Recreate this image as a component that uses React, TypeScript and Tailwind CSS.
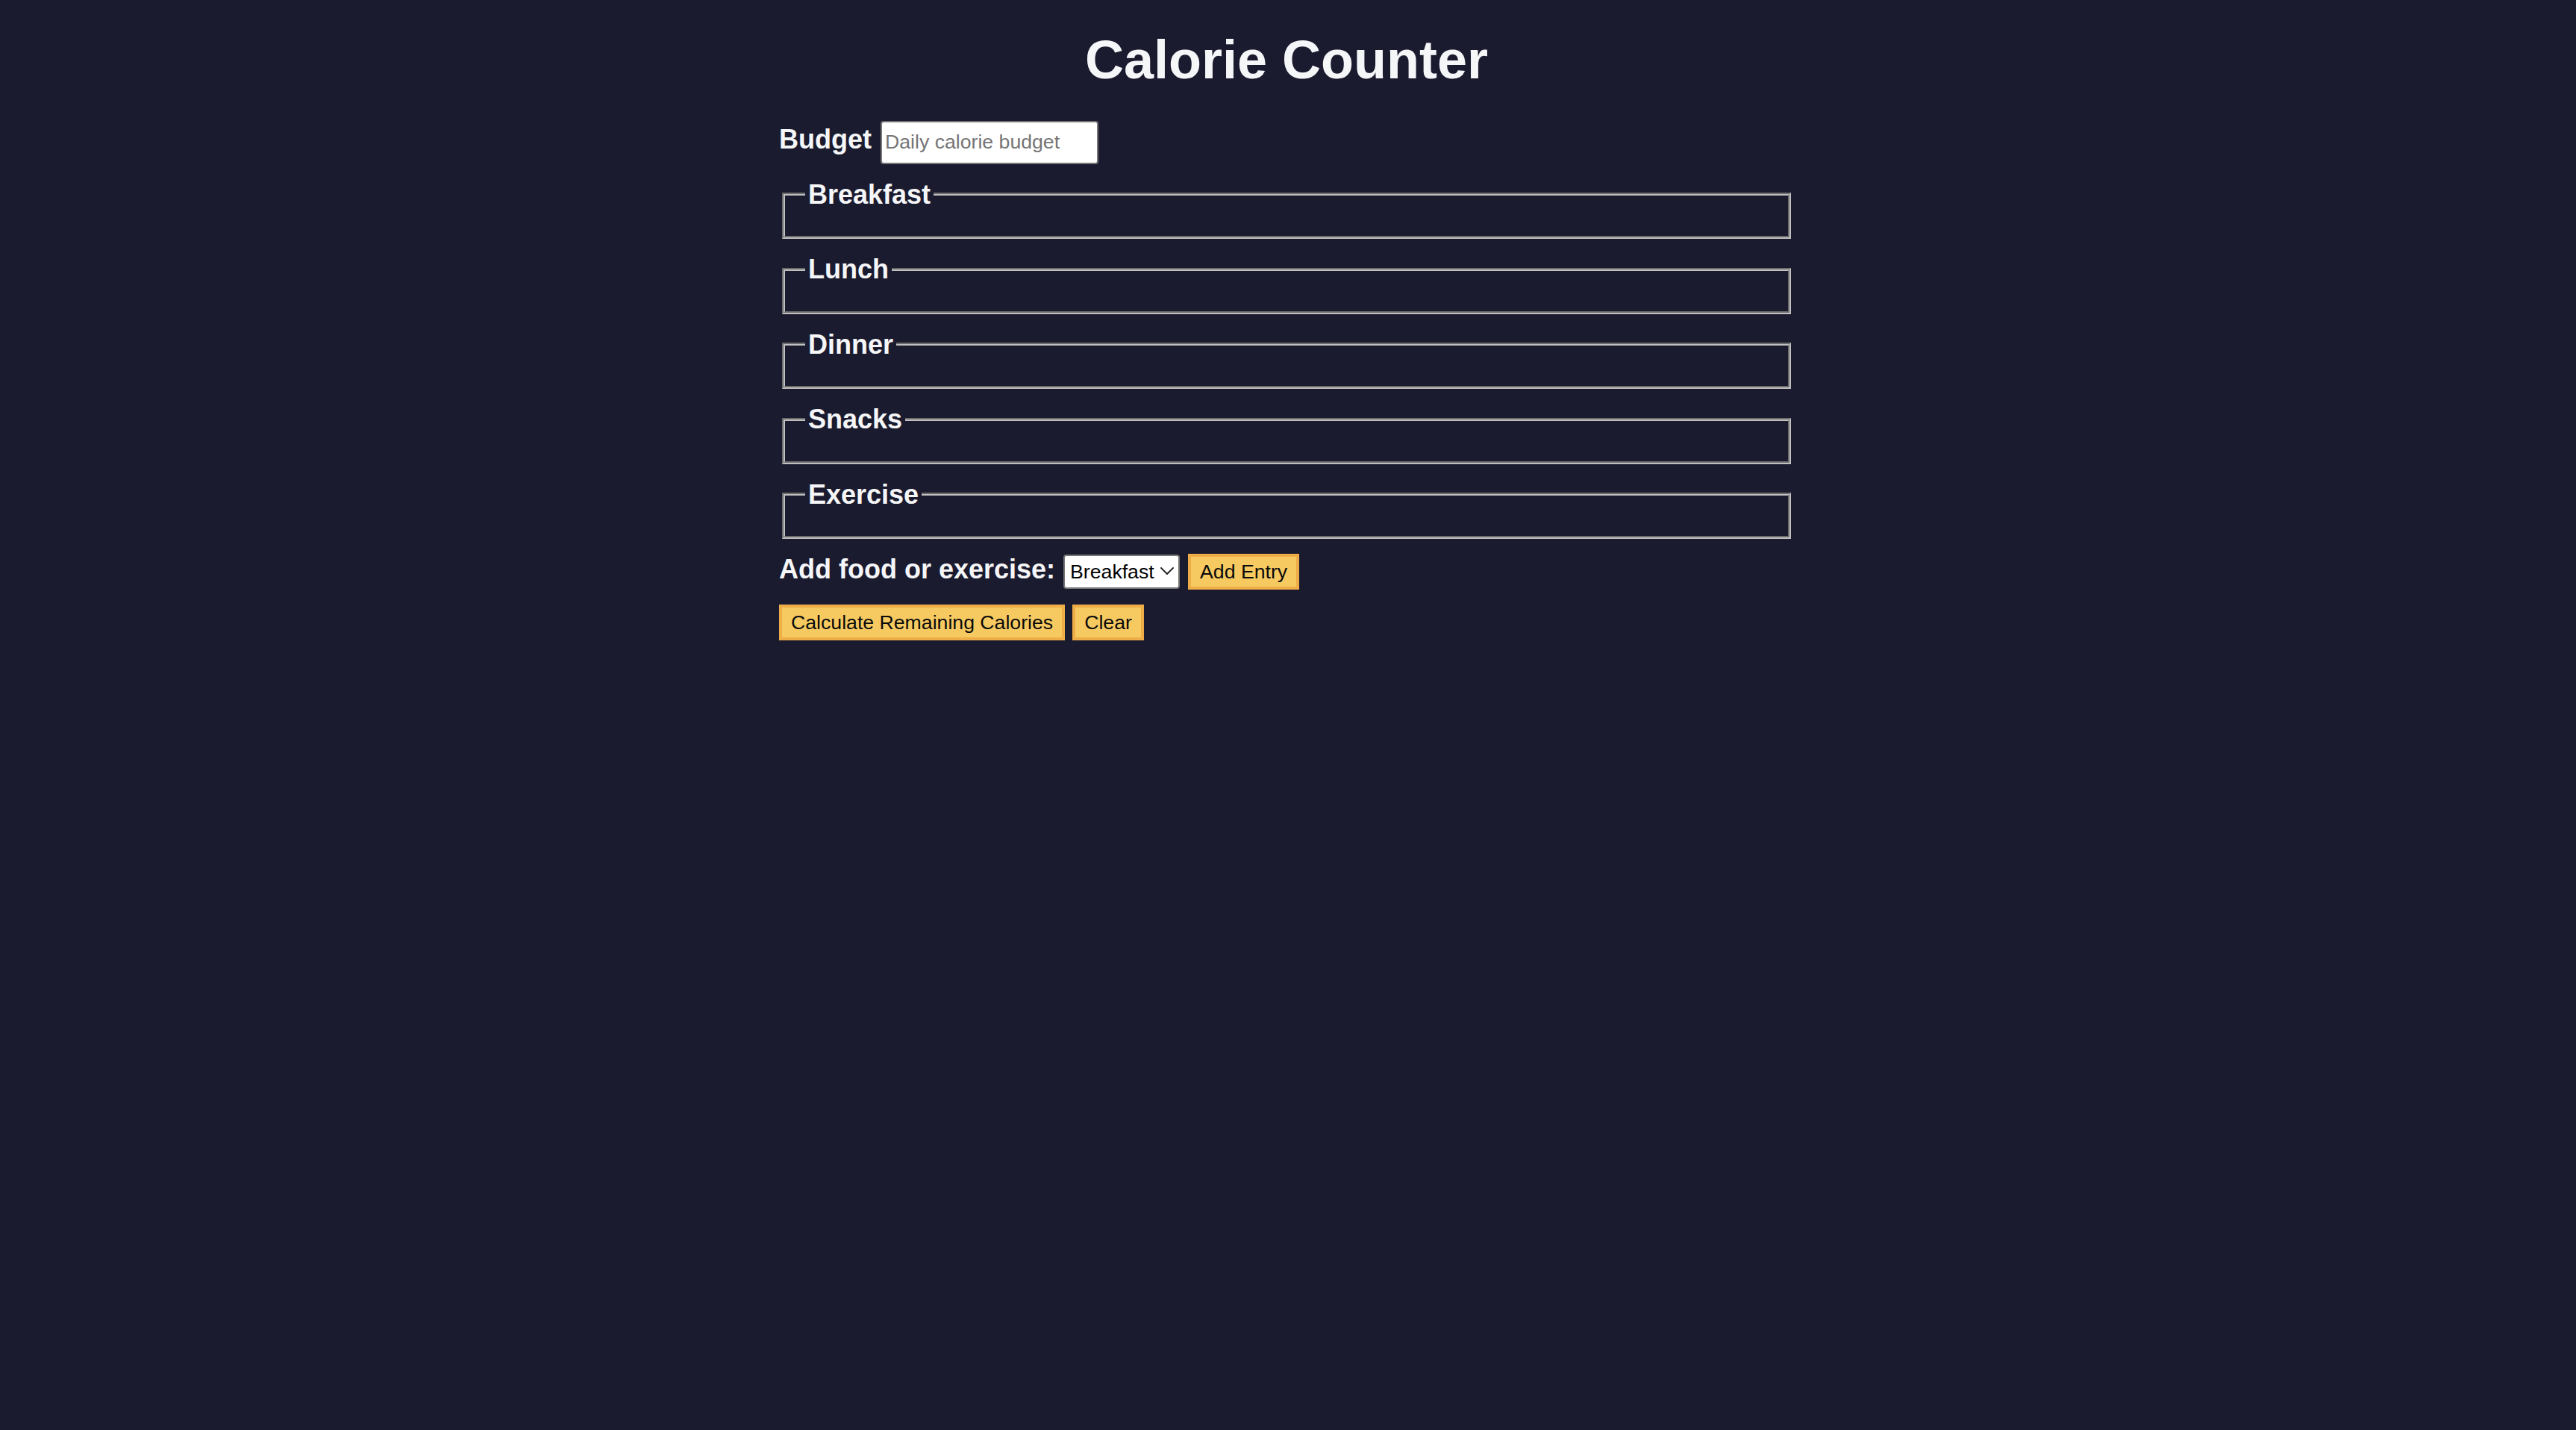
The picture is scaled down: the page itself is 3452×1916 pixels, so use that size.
import { ChangeEvent, FormEvent, useState } from "react";

const meals = ["Breakfast", "Lunch", "Dinner", "Snacks", "Exercise"];

function Chevron() {
  return (
    <svg
      width="18"
      height="10"
      viewBox="0 0 18 10"
      fill="none"
      stroke="#1b1b1b"
      strokeWidth="1.8"
      strokeLinecap="round"
      strokeLinejoin="round"
    >
      <polyline points="1,1 9,9 17,1" />
    </svg>
  );
}

export default function App() {
  const [budget, setBudget] = useState("");
  const [entry, setEntry] = useState("breakfast");

  function handleSubmit(e: FormEvent) {
    e.preventDefault();
  }

  return (
    <div className="min-h-screen bg-[#1b1b30] pt-[39px] pr-[10px] pl-[6px] font-['Liberation_Sans',Arial,sans-serif] text-[36px] leading-[1.149] text-[#f5f6f7]">
      <h1 className="mb-[40px] text-center text-[72px] font-bold leading-[1.149]">
        Calorie Counter
      </h1>
      <div className="mx-auto w-[90%] max-w-[1360px]">
        <form onSubmit={handleSubmit}>
          <div className="flex items-baseline gap-[12px]">
            <label htmlFor="budget" className="font-bold">
              Budget
            </label>
            <input
              id="budget"
              type="number"
              min="0"
              value={budget}
              onChange={(e: ChangeEvent<HTMLInputElement>) => setBudget(e.target.value)}
              placeholder="Daily calorie budget"
              className="h-[58px] w-[292px] rounded-[4px] border-2 border-[#767676] bg-white px-[4px] text-[26.67px] text-black placeholder:text-[#757575] [appearance:textfield]"
            />
          </div>

          {meals.map((meal) => (
            <fieldset
              key={meal}
              className="mx-[4px] mt-[20px] border-[4px] border-[#c0c0c0] px-[27px] pt-[12.6px] pb-[22.5px] [border-style:groove]"
            >
              <legend className="px-[4px] font-bold">{meal}</legend>
              <div className="flex flex-col"></div>
            </fieldset>
          ))}

          <div className="mt-[20px] flex items-baseline">
            <label htmlFor="entry-dropdown" className="font-bold">
              Add food or exercise:
            </label>
            <div className="relative ml-[11px] flex">
              <select
                id="entry-dropdown"
                value={entry}
                onChange={(e: ChangeEvent<HTMLSelectElement>) => setEntry(e.target.value)}
                className="h-[46px] w-[156px] appearance-none rounded-[4px] border-2 border-[#767676] bg-white pr-[30px] pl-[7px] text-[26.67px] text-black"
              >
                {meals.map((m) => (
                  <option key={m} value={m.toLowerCase()}>
                    {m}
                  </option>
                ))}
              </select>
              <span className="pointer-events-none absolute top-[17px] right-[8px] flex">
                <Chevron />
              </span>
            </div>
            <button
              type="button"
              className="ml-[11px] h-[48px] border-4 border-[#efad48] bg-[#f6ca61] px-[12px] text-[26.67px] text-[#0a0a0a]"
            >
              Add Entry
            </button>
          </div>

          <div className="mt-[20px] flex gap-[10px]">
            <button
              type="submit"
              className="h-[48px] border-4 border-[#efad48] bg-[#f6ca61] px-[12px] text-[26.67px] text-[#0a0a0a]"
            >
              Calculate Remaining Calories
            </button>
            <button
              type="button"
              onClick={() => setBudget("")}
              className="h-[48px] border-4 border-[#efad48] bg-[#f6ca61] px-[12px] text-[26.67px] text-[#0a0a0a]"
            >
              Clear
            </button>
          </div>
        </form>
      </div>
    </div>
  );
}
